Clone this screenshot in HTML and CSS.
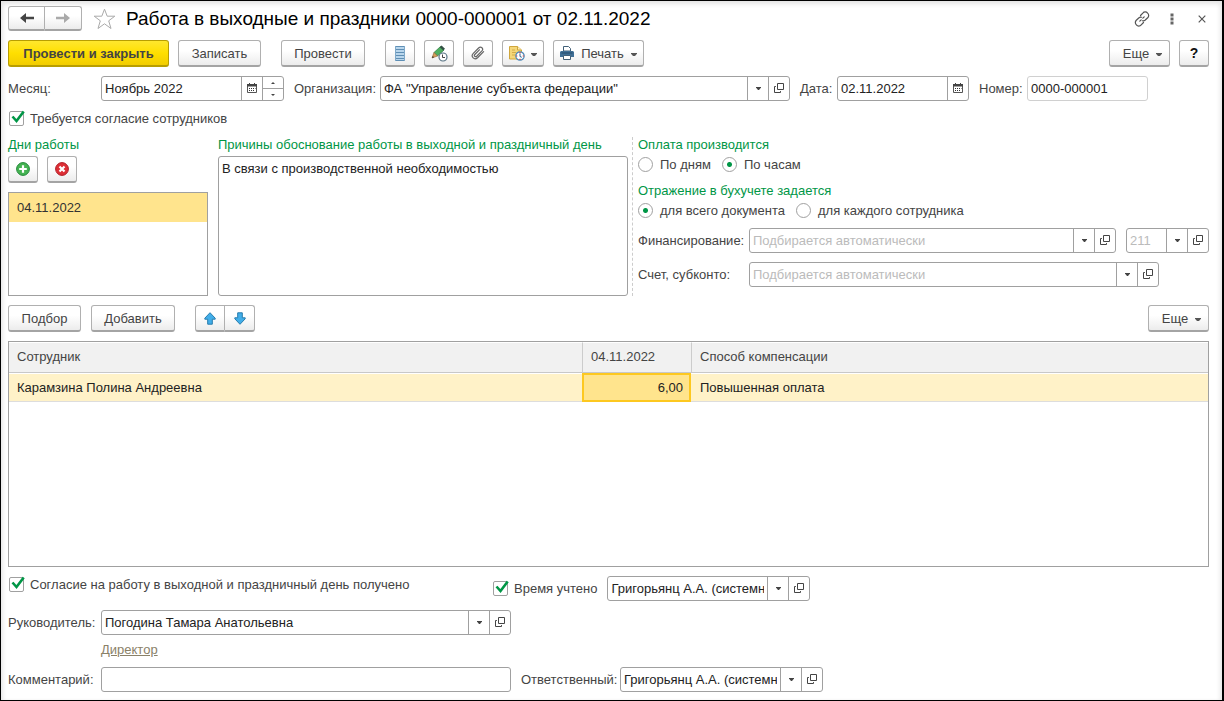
FILE: index.html
```html
<!DOCTYPE html>
<html lang="ru">
<head>
<meta charset="utf-8">
<meta name="viewport" content="width=device-width, initial-scale=1">
<title>Работа в выходные и праздники</title>
<link rel="stylesheet" href="styles.css">
</head>
<body>
<svg class="sprite" aria-hidden="true">
  <symbol id="caret" viewBox="0 0 6 3"><path d="M0 0h6v.800L4 3H2L0 .800z" fill="#555"/></symbol>
  <symbol id="caret-small" viewBox="0 0 5 3"><path d="M0 0h5v.600L3 3H2L0 .600z" fill="#444"/></symbol>
  <symbol id="open" viewBox="0 0 10 10"><path d="M3.500.500h6v6h-6zM1.900 3.500H.500v6h6V8.100" fill="none" stroke="#444"/></symbol>
  <symbol id="calendar" viewBox="0 0 10 10"><path d="M.500 1.500h9v8h-9z" fill="#fff" stroke="#555"/><path d="M0 1h10v2.500H0zM2 0h1v2H2zM7 0h1v2H7z" fill="#444"/><path d="M2 5.500h1M4 5.500h1M6 5.500h1M8 5.500h.500M2 7.500h1M4 7.500h1M6 7.500h1" stroke="#333"/></symbol>
</svg>
<main class="window">
  <header class="titlebar">
    <div class="joined">
      <button class="btn nav" type="button" aria-label="Назад"><svg width="14" height="10" viewBox="0 0 14 10"><path d="M14 3.700v2.600H6V10L0 5l6-5v3.700z" fill="#444"/></svg></button>
      <button class="btn nav" type="button" aria-label="Вперед"><svg width="14" height="10" viewBox="0 0 14 10"><path d="M0 3.700v2.600h8V10l6-5-6-5v3.700z" fill="#aaa"/></svg></button>
    </div>
    <button class="plain star" type="button" aria-label="В избранное"><svg width="23" height="22" viewBox="0 0 23 22"><path d="M11.500 1.200l2.700 7h7.600l-6.100 4.600 2.300 7.700-6.500-4.700L5 20.500l2.300-7.700L1.200 8.200h7.600z" fill="#fff" stroke="#aaa"/></svg></button>
    <h1 class="title">Работа в выходные и праздники 0000-000001 от 02.11.2022</h1>
    <div class="tools">
      <button class="plain" type="button" aria-label="Ссылка"><svg width="16" height="16" viewBox="0 0 16 16" fill="none" stroke="#555" stroke-width="1.200" stroke-linecap="round"><path d="M6.500 4.500L8.800 2.100a3 3 0 0 1 4.800 0a3.200 3.200 0 0 1 .100 4.700L11 9.300a2.600 2.600 0 0 1-2.500.500M9.500 11.500L7.200 13.900a3 3 0 0 1-4.800 0a3.200 3.200 0 0 1-.100-4.700L5 6.700a2.600 2.600 0 0 1 2.500-.500M5.800 10.200l1.400-1.400M8.800 7.200l1.400-1.400"/></svg></button>
      <button class="plain" type="button" aria-label="Меню"><svg width="4" height="12" viewBox="0 0 4 12"><path d="M.500.500h3v3h-3zM.500 4.500h3v3h-3zM.500 8.500h3v3h-3z" fill="#666"/></svg></button>
      <button class="plain" type="button" aria-label="Закрыть"><svg width="8" height="8" viewBox="0 0 8 8"><path d="M.700.700l6.600 6.600M7.300.700L.700 7.300" stroke="#555" stroke-width="1.200"/></svg></button>
    </div>
  </header>

  <div class="toolbar">
    <button class="btn primary" type="button">Провести и закрыть</button>
    <button class="btn write" type="button">Записать</button>
    <button class="btn post apart" type="button">Провести</button>
    <button class="btn icon apart" type="button" aria-label="Реестр"><svg width="12" height="15" viewBox="0 0 12 15"><path d="M1 0h10v15H1z" fill="#b9d6ec"/><path d="M1 .500h10M1 3.500h10M1 6.500h10M1 9.500h10M1 12.500h10M1 14.500h10" stroke="#5f8fb5"/><path d="M1.500 0v15M10.500 0v15" stroke="#7fa9c9"/></svg></button>
    <button class="btn icon" type="button" aria-label="Исправить"><svg width="17" height="17" viewBox="0 0 17 17"><path d="M3 7.500L9.500 1.500 13 5 6.500 11z" fill="#4fb061" stroke="#2c7a3e" stroke-width=".700"/><path d="M8.700 2.200L10.500.600l3.500 3.200-1.700 1.800z" fill="#345045"/><path d="M1 13l2-5.500L6.500 11z" fill="#d9a05a" stroke="#8a5b2b" stroke-width=".600"/><path d="M1 13l.800-2 1.300 1.200z" fill="#333"/><circle cx="12" cy="12" r="4" fill="#fff" stroke="#577283" stroke-width="1.200"/><path d="M11.500 9.500v3h2.500" fill="none" stroke="#444"/></svg></button>
    <button class="btn icon" type="button" aria-label="Файлы"><svg width="14" height="14" viewBox="0 0 14 14" fill="none" stroke="#666" stroke-width="1.200" stroke-linecap="round"><path d="M12.600 5.600l-5.800 5.900c-3.300 3.200-7.600-.700-4.500-4.200L7.600 2c2.400-2.300 5.400.500 3.300 2.900l-5.200 5.300c-1.400 1.300-3.100-.300-1.900-1.700l4.600-4.700"/></svg></button>
    <button class="btn icon-menu" type="button" aria-label="Отчеты"><svg width="16" height="16" viewBox="0 0 16 16"><path d="M.500 1.500h8l4 3.500v9H.500z" fill="#f5d779" stroke="#cfa63c"/><path d="M8.500 1.500V5h4" fill="#fff0b7" stroke="#cfa63c"/><path d="M3 5h3M3 7.500h4M3 10h3" stroke="#d4ad49"/><circle cx="11" cy="11" r="4.200" fill="#fff" stroke="#4d88b7" stroke-width="1.200"/><path d="M11 8.500v3l1.800.800" fill="none" stroke="#286594"/><path d="M11 7v1.300M11 13.700V15M7 11h1.300M13.700 11H15" stroke="#d33a35" stroke-width="1.200"/></svg><svg class="caret"><use href="#caret"/></svg></button>
    <button class="btn print" type="button"><svg width="14" height="14" viewBox="0 0 14 14"><path d="M3.500.500h5l2 2V5h-7z" fill="#fff" stroke="#426078"/><path d="M0 6l1-1h12l1 1v5H0z" fill="#3f6f96"/><path d="M1.500 7h11" stroke="#244a68"/><path d="M3.500 9.500h7v4h-7z" fill="#fff" stroke="#426078"/></svg><span>Печать</span><svg class="caret"><use href="#caret"/></svg></button>
    <button class="btn more push" type="button">Еще<svg class="caret"><use href="#caret"/></svg></button>
    <button class="btn icon help" type="button">?</button>
  </div>

  <div class="row">
    <label class="side-label" for="month">Месяц:</label>
    <div class="field w-month"><input id="month" value="Ноябрь 2022"><button type="button" aria-label="Календарь"><svg class="cal"><use href="#calendar"/></svg></button><span class="spin"><button type="button" aria-label="Больше"><svg width="4" height="2" viewBox="0 0 4 2"><path d="M0 2h4L2 0z" fill="#444"/></svg></button><button type="button" aria-label="Меньше"><svg width="4" height="2" viewBox="0 0 4 2"><path d="M0 0h4L2 2z" fill="#444"/></svg></button></span></div>
    <label class="next org-label" for="org">Организация:</label>
    <div class="field w-wide"><input id="org" value="ФА &quot;Управление субъекта федерации&quot;"><button type="button" aria-label="Выбрать"><svg class="caret-small"><use href="#caret-small"/></svg></button><button type="button" aria-label="Открыть"><svg class="open"><use href="#open"/></svg></button></div>
    <label class="next date-label" for="date">Дата:</label>
    <div class="field w-date"><input id="date" value="02.11.2022"><button type="button" aria-label="Календарь"><svg class="cal"><use href="#calendar"/></svg></button></div>
    <label class="next num-label" for="num">Номер:</label>
    <div class="field w-num pale"><input id="num" value="0000-000001"></div>
  </div>

  <label class="choice require"><input type="checkbox" checked>Требуется согласие сотрудников</label>

  <section class="details">
    <div class="days">
      <h2 class="heading">Дни работы</h2>
      <div class="day-tools">
        <button class="btn icon" type="button" aria-label="Добавить день"><svg width="14" height="14" viewBox="0 0 14 14"><circle cx="7" cy="7" r="6.400" fill="#45b352" stroke="#23883a"/><path d="M7 3.200v7.600M3.200 7h7.600" stroke="#fff" stroke-width="2.200"/></svg></button>
        <button class="btn icon" type="button" aria-label="Удалить день"><svg width="14" height="14" viewBox="0 0 14 14"><circle cx="7" cy="7" r="6.400" fill="#dd2f36" stroke="#b01f28"/><path d="M4.500 4.500l5 5M9.500 4.500l-5 5" stroke="#fff" stroke-width="2.200"/></svg></button>
      </div>
      <ul class="day-list"><li>04.11.2022</li></ul>
    </div>
    <div class="reason">
      <label class="heading" for="reason">Причины обоснование работы в выходной и праздничный день</label>
      <textarea id="reason">В связи с производственной необходимостью</textarea>
    </div>
    <div class="payment">
      <h2 class="heading">Оплата производится</h2>
      <div class="radios">
        <label class="choice"><input type="radio" name="pay">По дням</label>
        <label class="choice"><input type="radio" name="pay" checked>По часам</label>
      </div>
      <h2 class="heading">Отражение в бухучете задается</h2>
      <div class="radios">
        <label class="choice"><input type="radio" name="acc" checked>для всего документа</label>
        <label class="choice"><input type="radio" name="acc">для каждого сотрудника</label>
      </div>
      <div class="accounts">
        <div class="row">
          <label class="pay-label" for="fin">Финансирование:</label>
          <div class="field w-fin"><input id="fin" placeholder="Подбирается автоматически"><button type="button" aria-label="Выбрать"><svg class="caret-small"><use href="#caret-small"/></svg></button><button type="button" aria-label="Открыть"><svg class="open"><use href="#open"/></svg></button></div>
          <div class="field w-code next"><input aria-label="Код" placeholder="211"><button type="button" aria-label="Выбрать"><svg class="caret-small"><use href="#caret-small"/></svg></button><button type="button" aria-label="Открыть"><svg class="open"><use href="#open"/></svg></button></div>
        </div>
        <div class="row">
          <label class="pay-label" for="acct">Счет, субконто:</label>
          <div class="field w-wide"><input id="acct" placeholder="Подбирается автоматически"><button type="button" aria-label="Выбрать"><svg class="caret-small"><use href="#caret-small"/></svg></button><button type="button" aria-label="Открыть"><svg class="open"><use href="#open"/></svg></button></div>
        </div>
      </div>
    </div>
  </section>

  <div class="toolbar list-tools">
    <button class="btn pick" type="button">Подбор</button>
    <button class="btn add" type="button">Добавить</button>
    <div class="joined apart">
      <button class="btn icon" type="button" aria-label="Вверх"><svg width="12" height="13" viewBox="0 0 12 13"><path d="M6 .700l5.200 5.500v1H8.300v5H3.700v-5H.800v-1z" fill="#42aee9" stroke="#277cad"/></svg></button>
      <button class="btn icon" type="button" aria-label="Вниз"><svg width="12" height="13" viewBox="0 0 12 13"><path d="M6 12.300L.800 6.800v-1h2.900v-5h4.600v5h2.900v1z" fill="#42aee9" stroke="#277cad"/></svg></button>
    </div>
    <button class="btn more push" type="button">Еще<svg class="caret"><use href="#caret"/></svg></button>
  </div>

  <div class="grid">
    <table>
      <colgroup><col class="c-name"><col class="c-hours"><col></colgroup>
      <thead><tr><th>Сотрудник</th><th>04.11.2022</th><th>Способ компенсации</th></tr></thead>
      <tbody><tr><td>Карамзина Полина Андреевна</td><td class="current">6,00</td><td>Повышенная оплата</td></tr></tbody>
    </table>
  </div>

  <div class="consent">
    <label class="choice agreed"><input type="checkbox" checked>Согласие на работу в выходной и праздничный день получено</label>
    <div class="row">
      <label class="choice timed"><input type="checkbox" checked>Время учтено</label>
      <div class="field w-user"><input aria-label="Кем учтено" value="Григорьянц А.А. (системный)"><button type="button" aria-label="Выбрать"><svg class="caret-small"><use href="#caret-small"/></svg></button><button type="button" aria-label="Открыть"><svg class="open"><use href="#open"/></svg></button></div>
    </div>
  </div>

  <div class="row manager">
    <label class="side-label" for="boss">Руководитель:</label>
    <div class="field w-wide"><input id="boss" value="Погодина Тамара Анатольевна"><button type="button" aria-label="Выбрать"><svg class="caret-small"><use href="#caret-small"/></svg></button><button type="button" aria-label="Открыть"><svg class="open"><use href="#open"/></svg></button></div>
  </div>
  <div class="position"><a href="#">Директор</a></div>
  <div class="row comment">
    <label class="side-label" for="comment">Комментарий:</label>
    <div class="field w-wide"><input id="comment"></div>
    <label class="next resp-label" for="resp">Ответственный:</label>
    <div class="field w-user"><input id="resp" value="Григорьянц А.А. (системный)"><button type="button" aria-label="Выбрать"><svg class="caret-small"><use href="#caret-small"/></svg></button><button type="button" aria-label="Открыть"><svg class="open"><use href="#open"/></svg></button></div>
  </div>
</main>
</body>
</html>
```

FILE: styles.css
```css
* { box-sizing: border-box; }

body {
  margin: 0;
  background: #fff;
  color: #444;
  font: 13px/15px "Liberation Sans", Arial, sans-serif;
}

button, input, textarea { font: inherit; color: inherit; margin: 0; }
svg { display: block; flex: none; }
.sprite { position: absolute; width: 0; height: 0; }

.window {
  display: flex;
  flex-direction: column;
  min-height: 100vh;
  padding: 5px 13px 8px 7px;
  border: 1px solid #000;
  border-right-width: 2px;
  box-shadow: inset 0 5px 5px -2px #e4e4e4, inset -4px 0 4px -2px #e8e8e8, inset 4px 0 4px -2px #e8e8e8;
}

/* Buttons */
.btn {
  display: flex;
  align-items: center;
  justify-content: center;
  flex: none;
  height: 27px;
  padding: 0;
  border: 1px solid #b0b0b0;
  border-bottom: 2px solid #a4a4a4;
  border-radius: 3px;
  background: linear-gradient(#fff 40%, #ececec);
}
.primary {
  width: 161px;
  border-color: #b89e00;
  background: linear-gradient(#ffe72e, #ffdf00 50%, #f2cd00);
  font-weight: bold;
}
.write { width: 83px; }
.post, .add { width: 84px; }
.pick { width: 73px; }
.icon { width: 30px; }
.icon-menu { width: 42px; gap: 6px; }
.print { width: 91px; gap: 7px; }
.more { width: 61px; gap: 7px; padding-left: 6px; }
.help { color: #111; font-size: 14px; font-weight: bold; }
.plain { display: flex; padding: 0; border: 0; background: none; }

.joined { display: flex; }
.joined .btn:first-child { border-radius: 3px 0 0 3px; }
.joined .btn:last-child { border-left: 0; border-radius: 0 3px 3px 0; }
.nav { width: 37px; height: 25px; }

.caret { width: 6px; height: 3px; margin-top: 3px; }
.caret-small { width: 5px; height: 3px; }
.open, .cal { width: 10px; height: 10px; }

/* Title */
.titlebar { display: flex; align-items: center; height: 25px; }
.star { margin: 0 10px 0 11px; }
.title { margin: 0; color: #000; font-size: 19px; font-weight: normal; line-height: 24px; }
.tools { display: flex; align-items: center; gap: 20px; margin-left: auto; padding-right: 3px; }
.tools .plain:last-child { margin-left: 4px; }

.toolbar { display: flex; gap: 9px; margin: 9px 0; }
.apart { margin-left: 11px; }
.push { margin-left: auto; }

/* Fields */
.row { display: flex; align-items: center; }
.side-label { flex: none; width: 93px; }
.next { margin-left: 10px; }
.org-label { flex: none; width: 86px; }
.date-label { flex: none; width: 37px; }
.num-label { flex: none; width: 48px; }
.resp-label { flex: none; width: 99px; }
.pay-label { flex: none; width: 111px; }

.field {
  display: flex;
  height: 25px;
  border: 1px solid #a0a0a0;
  border-radius: 3px;
  background: #fff;
  color: #222;
}
.field input { flex: 1; min-width: 0; width: 0; padding: 0 3px; border: 0; background: none; outline: 0; }
.field input::placeholder { color: #bbb; opacity: 1; }
.field > button {
  display: flex;
  align-items: center;
  justify-content: center;
  width: 21px;
  padding: 0 0 1px;
  border: 0;
  border-left: 1px solid #a0a0a0;
  background: none;
}
.spin { display: flex; flex-direction: column; width: 21px; border-left: 1px solid #a0a0a0; }
.spin button { display: flex; flex: 1; align-items: center; justify-content: center; padding: 0; border: 0; background: none; }
.spin button + button { border-top: 1px solid #a0a0a0; }
.pale { border-color: #d0d0d0; }
.w-month { flex: 0 1 183px; }
.w-wide { flex: 0 1 410px; }
.w-date { flex: 0 1 132px; }
.w-num { flex: 0 1 121px; }
.w-fin { flex: 0 1 367px; }
.w-code { flex: 0 0 83px; }
.w-user { flex: 0 0 203px; }

/* Check boxes and radios */
.choice { display: flex; align-items: center; gap: 6px; }
.choice input { position: relative; flex: none; appearance: none; width: 15px; height: 15px; border: 1px solid #a0a0a0; background: #fff; }
.choice input[type="checkbox"] { margin-left: 1px; border-radius: 2px; }
.choice input[type="radio"] { margin-right: 1px; border-radius: 50%; }
.choice input[type="checkbox"]:checked::after {
  content: "";
  position: absolute;
  left: 1px;
  top: -2px;
  width: 14px;
  height: 14px;
  background: url("data:image/svg+xml,%3Csvg xmlns='http://www.w3.org/2000/svg' viewBox='0 0 14 14'%3E%3Cpath d='M1.500 6.500L5.500 11 12.700 1.500' fill='none' stroke='%23009646' stroke-width='2.600'/%3E%3C/svg%3E");
}
.choice input[type="radio"]:checked { background: radial-gradient(circle, #009646 2px, #fff 3px); }
.require { align-self: flex-start; margin: 10px 0 11px; }

.heading { margin: 0; color: #009646; font-size: 13px; font-weight: normal; line-height: 15px; }

.details { display: flex; gap: 10px; }
.days { flex: none; width: 200px; display: flex; flex-direction: column; }
.day-tools { display: flex; gap: 9px; margin: 4px 0 9px; }
.day-list { flex: 1; margin: 0; padding: 0; border: 1px solid #a0a0a0; list-style: none; }
.day-list li { padding: 7px 8px; background: #ffe48d; color: #333; }
.reason { flex: 0 1 410px; display: flex; flex-direction: column; gap: 4px; }
.reason textarea { flex: 1; min-height: 140px; padding: 4px 3px; border: 1px solid #a0a0a0; border-radius: 3px; resize: none; outline: 0; color: #222; }
.payment { flex: 1; min-width: 0; margin-left: -6px; padding-left: 5px; border-left: 1px dashed #ccc; }
.radios { display: flex; gap: 11px; margin: 5px 0 11px; }
.radios:has(+ .accounts) { margin-bottom: 10px; }
.accounts { display: flex; flex-direction: column; gap: 9px; margin-bottom: 9px; }

.list-tools { gap: 10px; }
.list-tools .apart { margin-left: 10px; }

/* Employees */
.grid { flex: 1; min-height: 100px; border: 1px solid #a0a0a0; }
.grid table { width: 100%; border-collapse: separate; border-spacing: 0; table-layout: fixed; }
.c-name { width: 573px; }
.c-hours { width: 109px; }
.grid th { height: 31px; padding: 0 8px 2px; border-top: 1px solid #fff; border-bottom: 1px solid #c8c8c8; background: #f1f1f1; font-weight: normal; text-align: left; }
.grid th + th { border-left: 1px solid #ccc; }
.grid td { height: 29px; padding: 0 8px; border-top: 1px solid #fff; border-bottom: 1px solid #ddd; background: #fff2c8; color: #222; }
.grid td + td { padding-left: 9px; }
.grid td.current { padding: 0 6px; border: 2px solid #fdc820; background: #ffe48d; text-align: right; }

/* Footer */
.consent { display: flex; align-items: flex-start; margin-top: 9px; }
.agreed { flex: 0 1 484px; padding-top: 1px; }
.timed { margin-right: 10px; }
.manager { margin-top: 9px; }
.position { margin: 7px 0 10px 93px; }
.position a { color: #8a8168; }
```
